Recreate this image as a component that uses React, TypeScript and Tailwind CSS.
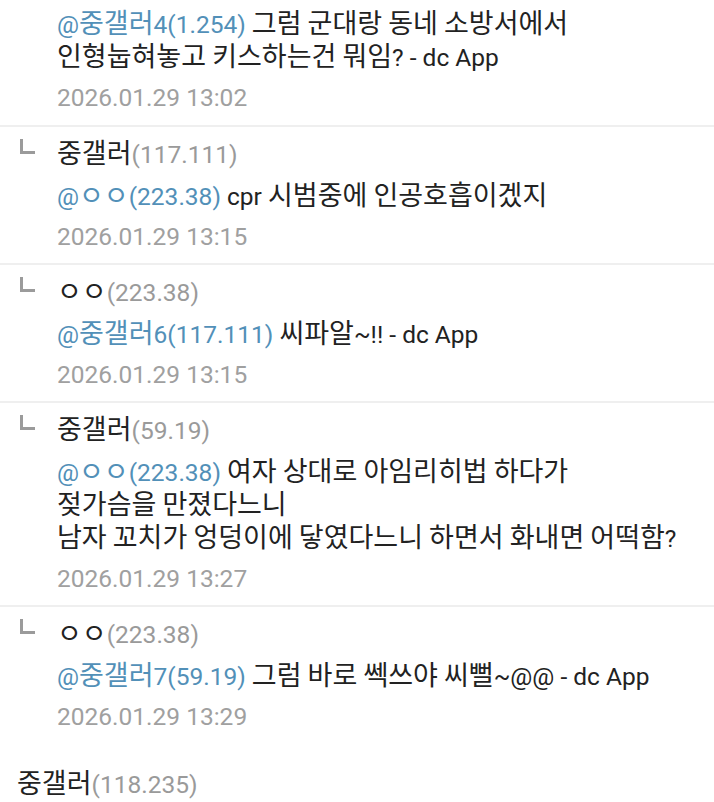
import React from "react";

const FONT = { fontFamily: 'Roboto, "Noto Sans CJK KR", "Noto Sans", sans-serif' };

function T({ s }: { s: string }) {
  const parts = s.split(/([\u3131-\u318E\uAC00-\uD7A3]+)/);
  return (
    <>
      {parts.map((p, i) =>
        p === "" ? null : /[\u3131-\u318E\uAC00-\uD7A3]/.test(p) ? (
          <span key={i} className="text-[27px]">
            {p}
          </span>
        ) : (
          <span key={i}>{p}</span>
        )
      )}
    </>
  );
}

function Mark() {
  return <div className="ml-[20px] mt-[1px] w-[15px] h-[15px] border-l-[3px] border-b-[3px] border-[#9b9b9b]" />;
}

function Divider() {
  return <div className="h-[2px] bg-[#efefef]" />;
}

type Item = {
  name: string;
  ip: string;
  mention: string;
  lines: string[];
  date: string;
};

function Reply({ item }: { item: Item }) {
  return (
    <div className="flex pt-[11px] pb-[10px]">
      <div className="w-[57px] shrink-0">
        <Mark />
      </div>
      <div className="flex-1 min-w-0">
        <div className="h-[33px] leading-[33px] whitespace-nowrap mb-[9px]">
          <span className="text-[#222222]">
            <T s={item.name} />
          </span>
          <span className="text-[#9a9a9a]">({item.ip})</span>
        </div>
        <div className="leading-[33px] whitespace-nowrap text-[#222222]">
          {item.lines.map((l, i) => (
            <div key={i} className="h-[33px]">
              {i === 0 && (
                <span className="text-[#5290b8]">
                  <T s={item.mention} />
                </span>
              )}
              {i === 0 ? " " : ""}
              <T s={l} />
            </div>
          ))}
        </div>
        <div className="h-[33px] leading-[33px] mt-[7px] text-[#a0a0a0] whitespace-nowrap">{item.date}</div>
      </div>
    </div>
  );
}

export default function App() {
  const items: Item[] = [
    {
      name: "중갤러",
      ip: "117.111",
      mention: "@ㅇㅇ(223.38)",
      lines: ["cpr 시범중에 인공호흡이겠지"],
      date: "2026.01.29 13:15",
    },
    {
      name: "ㅇㅇ",
      ip: "223.38",
      mention: "@중갤러6(117.111)",
      lines: ["씨파알~!! - dc App"],
      date: "2026.01.29 13:15",
    },
    {
      name: "중갤러",
      ip: "59.19",
      mention: "@ㅇㅇ(223.38)",
      lines: ["여자 상대로 아임리히법 하다가", "젖가슴을 만졌다느니", "남자 꼬치가 엉덩이에 닿였다느니 하면서 화내면 어떡함?"],
      date: "2026.01.29 13:27",
    },
    {
      name: "ㅇㅇ",
      ip: "223.38",
      mention: "@중갤러7(59.19)",
      lines: ["그럼 바로 쎅쓰야 씨뻘~@@ - dc App"],
      date: "2026.01.29 13:29",
    },
  ];
  return (
    <div className="w-[714px] h-[802px] overflow-hidden bg-white text-[24.5px]" style={FONT}>
      <div className="flex pt-[8px] pb-[11px]">
        <div className="w-[57px] shrink-0" />
        <div className="flex-1 min-w-0">
          <div className="leading-[33px] whitespace-nowrap text-[#222222]">
            <div className="h-[33px]">
              <span className="text-[#5290b8]">
                <T s="@중갤러4(1.254)" />
              </span>{" "}
              <T s="그럼 군대랑 동네 소방서에서" />
            </div>
            <div className="h-[33px]">
              <T s="인형눕혀놓고 키스하는건 뭐임? - dc App" />
            </div>
          </div>
          <div className="h-[33px] leading-[33px] mt-[7px] text-[#a0a0a0] whitespace-nowrap">2026.01.29 13:02</div>
        </div>
      </div>
      {items.map((it, i) => (
        <React.Fragment key={i}>
          <Divider />
          <Reply item={it} />
        </React.Fragment>
      ))}
      <div className="pl-[17px] pt-[25px] h-[58px] leading-[33px] whitespace-nowrap">
        <span className="text-[#222222]">
          <T s="중갤러" />
        </span>
        <span className="text-[#9a9a9a]">(118.235)</span>
      </div>
    </div>
  );
}
